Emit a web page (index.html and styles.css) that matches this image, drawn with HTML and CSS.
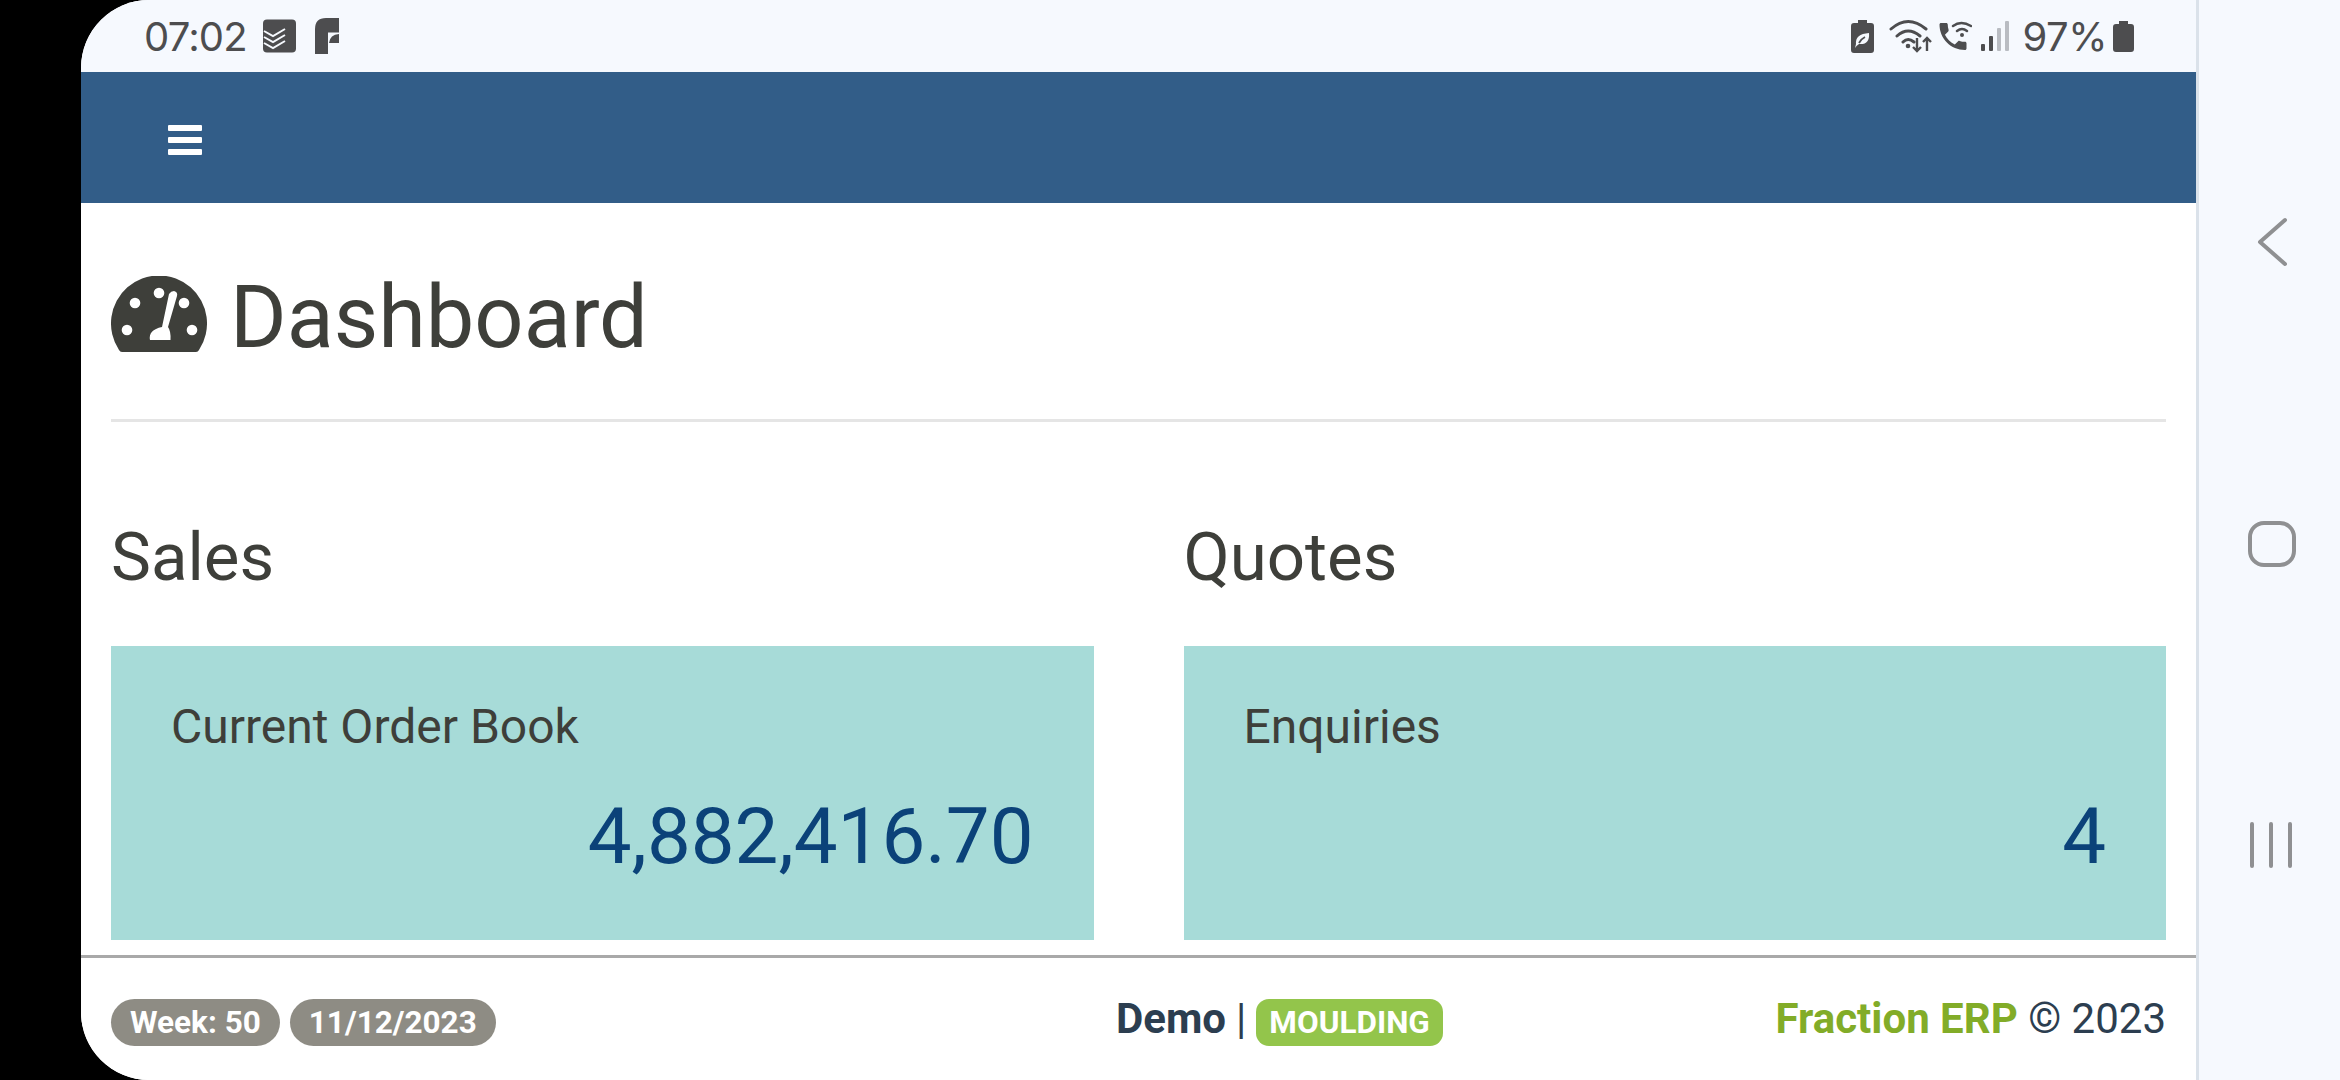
FILE: index.html
```html
<!DOCTYPE html>
<html lang="en">
<head>
<meta charset="utf-8">
<title>Dashboard</title>
<link rel="stylesheet" href="styles.css">
</head>
<body>
<div class="screen">
  <div class="app">
    <div class="status">
      <div class="status-left">
        <span class="clock">07:02</span>
        <svg class="ico-todo" viewBox="0 0 33 34"><rect width="33" height="33" y="0.5" rx="4" fill="#4d4d4f"/><path d="M1 12l9 5 12-7M1 18l9 5 12-7M1 24l9 5 12-7" fill="none" stroke="#f6f9fe" stroke-width="2"/></svg>
        <svg class="ico-f" viewBox="0 0 25 37"><path d="M0 36V11Q0 0 11 0H24V14.500H13V36Z" fill="#4d4d4f"/><path d="M14 25Q15 16.500 24 16V25Z" fill="#4d4d4f"/></svg>
      </div>
      <div class="status-right">
        <svg class="ico-leaf" viewBox="0 0 23 33"><path d="M7 0H16V3H20Q23 3 23 6V30Q23 33 20 33H3Q0 33 0 30V6Q0 3 3 3H7Z" fill="#4d4d4f"/><path d="M5 24Q4 14 18 13Q19 25 8 24Q5 26 4 28Z" fill="#f6f9fe"/><path d="M8 23Q10 19 14 17" fill="none" stroke="#4d4d4f" stroke-width="1.800"/></svg>
        <svg class="ico-wifi" viewBox="0 0 44 35"><g fill="none" stroke="#4d4d4f" stroke-width="3" stroke-linecap="round"><path d="M2 10Q19-5 37 10M8 17Q19 7 31 17M14 23Q19 18 25 23"/></g><circle cx="19" cy="27" r="2.300" fill="#4d4d4f"/><path d="M28 19V32M24 28l4 4 4-4M38 32V19M34 23l4-4 4 4" fill="none" stroke="#4d4d4f" stroke-width="2.400"/></svg>
        <svg class="ico-call" viewBox="0 0 34 31"><path transform="translate(-3 -2.500) scale(1.500)" d="M6.620 10.790c1.440 2.830 3.760 5.140 6.590 6.590l2.200-2.200c.27-.27.67-.36 1.020-.24 1.120.37 2.330.57 3.570.57.550 0 1 .45 1 1V20c0 .55-.45 1-1 1-9.390 0-17-7.610-17-17 0-.55.45-1 1-1h3.500c.55 0 1 .45 1 1 0 1.250.2 2.450.57 3.570.11.35.03.74-.25 1.020l-2.200 2.200z" fill="#4d4d4f"/><g fill="none" stroke="#4d4d4f" stroke-width="2.400" stroke-linecap="round"><path d="M15 5Q23-1 33 5M19 10Q24 6 29 10"/></g><circle cx="24" cy="14" r="2" fill="#4d4d4f"/></svg>
        <svg class="ico-signal" viewBox="0 0 28 30"><rect x="0" y="23" width="4" height="7" rx="1" fill="#4d4d4f"/><rect x="8" y="15" width="4" height="15" rx="1" fill="#4d4d4f"/><rect x="16" y="7" width="4" height="23" rx="1" fill="#b9bcc2"/><rect x="24" y="0" width="4" height="30" rx="1" fill="#b9bcc2"/></svg>
        <span class="pct">97%</span>
        <svg class="ico-batt" viewBox="0 0 21 31"><path d="M6 0H15V3H18Q21 3 21 6V28Q21 31 18 31H3Q0 31 0 28V6Q0 3 3 3H6Z" fill="#4d4d4f"/></svg>
      </div>
    </div>
    <header class="topbar">
      <div class="burger"><span></span><span></span><span></span></div>
    </header>
    <main class="content">
      <div class="page-head">
        <svg class="ico-gauge" viewBox="0 0 96 76"><path d="M8 74A48 48 0 1 1 88 74Q87 76 85 76H11Q9 76 8 74Z" fill="#3e3f3a"/><g fill="#fff"><circle cx="48" cy="17" r="5.300"/><circle cx="24" cy="27" r="5.300"/><circle cx="73" cy="27" r="5.300"/><circle cx="16" cy="54" r="5.300"/><circle cx="81" cy="54" r="5.300"/><path d="M51 51L58 18Q60 15 63 15 67 16 66 20L57 51Q60 55 59.500 64H39Q37 54 51 51Z"/></g></svg>
        <h1 class="title">Dashboard</h1>
      </div>
      <hr class="rule">
      <div class="cols">
        <section class="col">
          <h2 class="sub">Sales</h2>
          <div class="card">
            <div class="card-label">Current Order Book</div>
            <div class="card-value">4,882,416.70</div>
          </div>
        </section>
        <section class="col">
          <h2 class="sub">Quotes</h2>
          <div class="card">
            <div class="card-label">Enquiries</div>
            <div class="card-value">4</div>
          </div>
        </section>
      </div>
    </main>
    <footer class="footer">
      <div class="foot-left">
        <span class="pill">Week: 50</span>
        <span class="pill">11/12/2023</span>
      </div>
      <div class="foot-mid">
        <b class="demo">Demo</b> <span class="bar">|</span> <span class="tag">MOULDING</span>
      </div>
      <div class="foot-right"><b class="brand">Fraction ERP</b> © 2023</div>
    </footer>
  </div>
  <nav class="softkeys">
    <svg class="key-back" viewBox="0 0 30 50"><path d="M28 3L3 25 28 47" fill="none" stroke="#8f9092" stroke-width="4" stroke-linecap="round" stroke-linejoin="round"/></svg>
    <svg class="key-home" viewBox="0 0 48 50"><rect x="2" y="4" width="44" height="42" rx="14" fill="none" stroke="#8f9092" stroke-width="4"/></svg>
    <svg class="key-recent" viewBox="0 0 46 50"><path d="M3 4V46M22 4V46M41 4V46" fill="none" stroke="#8f9092" stroke-width="4" stroke-linecap="round"/></svg>
  </nav>
</div>
</body>
</html>
```
FILE: styles.css
```css
* { box-sizing: border-box; }
html, body { margin: 0; height: 100%; background: #000; overflow: hidden; }
body { font-family: Roboto, "Noto Sans", sans-serif; }
.screen { width: 2340px; height: 1080px; padding-left: 81px; display: flex; background: #000; }
.app { width: 2118px; height: 1080px; display: flex; flex-direction: column; background: #fff; border-top-left-radius: 68px; border-bottom-left-radius: 68px; overflow: hidden; border-right: 3px solid #dbe2ea; }
.status { height: 72px; flex: none; background: #f6f9fe; display: flex; justify-content: space-between; align-items: center; padding: 0 62px 0 63px; color: #4d4d4f; }
.status-left, .status-right { display: flex; align-items: center; }
.clock { font-family: Inter, Roboto, sans-serif; font-size: 40px; letter-spacing: -0.800px; }
.ico-todo { width: 33px; height: 34px; margin-left: 16px; }
.ico-f { width: 25px; height: 37px; margin-left: 19px; }
.ico-leaf { width: 23px; height: 33px; }
.ico-wifi { width: 44px; height: 35px; margin-left: 15px; }
.ico-call { width: 34px; height: 31px; margin-left: 5px; }
.ico-signal { width: 28px; height: 30px; margin-left: 9px; }
.pct { font-family: Inter, Roboto, sans-serif; font-size: 40px; margin-left: 14px; letter-spacing: -0.500px; }
.ico-batt { width: 21px; height: 31px; margin-left: 6px; }
.topbar { height: 131px; flex: none; background: #325d88; display: flex; align-items: center; padding-left: 87px; }
.burger { width: 34px; display: flex; flex-direction: column; gap: 6px; margin-top: 5px; }
.burger span { height: 6px; background: #fff; border-radius: 1px; }
.content { flex: 1; min-height: 0; overflow: hidden; padding: 0 30px; }
.page-head { display: flex; align-items: center; height: 216px; padding-top: 12px; }
.ico-gauge { width: 96px; height: 76px; flex: none; margin-bottom: 6px; }
.title { margin: 3px 0 0 23px; font-size: 86.400px; font-weight: 400; line-height: 1; color: #3e3f3a; }
.rule { margin: 0; border: 0; height: 3px; background: #e5e5e5; }
.cols { display: flex; gap: 90px; padding-top: 100px; }
.col { flex: 1; min-width: 0; }
.sub { margin: 0; font-size: 67.200px; font-weight: 400; line-height: 70px; color: #3e3f3a; }
.card { margin-top: 54px; height: 294px; background: #a7dbd8; padding: 51px 60px 0; }
.card-label { font-size: 48px; line-height: 60px; color: #3e3f3a; }
.card-value { margin-top: 35px; font-size: 78px; line-height: 90px; color: #0b4279; text-align: right; }
.footer { height: 125px; flex: none; background: #fff; border-top: 3px solid #a9a9a9; display: grid; grid-template-columns: 1005px auto 1fr; align-items: center; padding: 6px 30px 0; color: #2c3e50; }
.foot-left { display: flex; gap: 10px; }
.pill { height: 47px; display: flex; align-items: center; padding: 0 19px; border-radius: 24px; background: #8e8c84; color: #fff; font-size: 31.500px; font-weight: 700; }
.foot-mid { display: flex; align-items: center; gap: 10px; font-size: 42px; }
.demo, .bar { margin-bottom: 8px; }
.demo { font-weight: 700; }
.bar { font-weight: 400; }
.tag { height: 47px; display: flex; align-items: center; padding: 0 13px; border-radius: 13px; background: #93c54b; color: #fff; font-size: 31.500px; font-weight: 700; }
.foot-right { text-align: right; font-size: 42px; margin-bottom: 8px; }
.brand { color: #82ac28; font-weight: 700; }
.softkeys { width: 141px; height: 1080px; background: #f6f9fe; display: flex; flex-direction: column; align-items: center; padding-left: 5px; }
.key-back { width: 30px; height: 50px; margin-top: 217px; }
.key-home { width: 48px; height: 50px; margin-top: 252px; }
.key-recent { width: 46px; height: 50px; margin-top: 251px; }
```
